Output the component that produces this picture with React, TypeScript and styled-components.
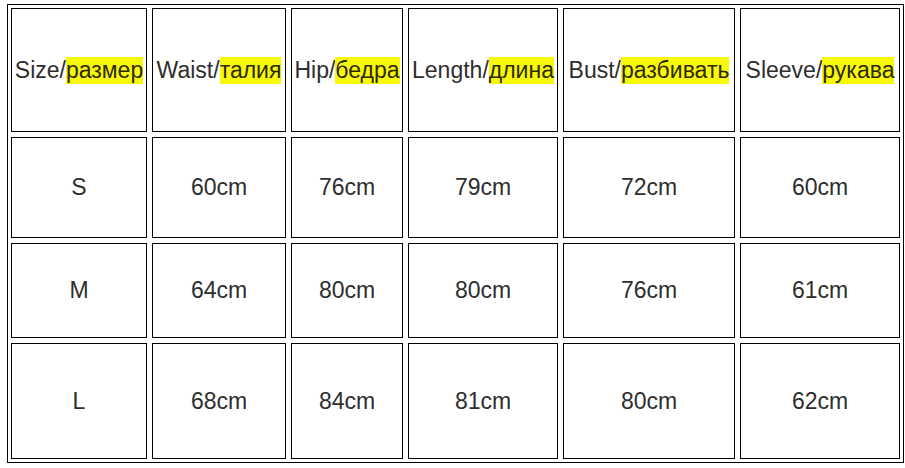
import React from "react";
import styled, { createGlobalStyle } from "styled-components";

const Global = createGlobalStyle`
  html, body { margin: 0; padding: 0; background: #ffffff; }
  body { font-family: "Liberation Sans", Arial, sans-serif; }
`;

const Page = styled.div`
  padding: 4px 0 0 7px;
`;

const Table = styled.div`
  display: grid;
  grid-template-columns: 136px 134px 112px 150px 172px 160px;
  grid-template-rows: 124px 101px 95px 116px;
  gap: 5px;
  padding: 3px;
  border: 1px solid #000;
  width: max-content;
`;

const Cell = styled.div`
  border: 1px solid #000;
  display: flex;
  align-items: center;
  justify-content: center;
  font-size: 23px;
  color: #2e2e2e;
  white-space: nowrap;
`;

const Mark = styled.span`
  background: #f8f80a;
  color: #2e2a00;
`;

const headers: [string, string][] = [
  ["Size/", "размер"],
  ["Waist/", "талия"],
  ["Hip/", "бедра"],
  ["Length/", "длина"],
  ["Bust/", "разбивать"],
  ["Sleeve/", "рукава"],
];

const rows: string[][] = [
  ["S", "60cm", "76cm", "79cm", "72cm", "60cm"],
  ["M", "64cm", "80cm", "80cm", "76cm", "61cm"],
  ["L", "68cm", "84cm", "81cm", "80cm", "62cm"],
];

export default function App() {
  return (
    <>
      <Global />
      <Page>
        <Table>
          {headers.map(([en, ru]) => (
            <Cell key={en}>
              {en}
              <Mark>{ru}</Mark>
            </Cell>
          ))}
          {rows.map((r, i) =>
            r.map((v, j) => <Cell key={`${i}-${j}`}>{v}</Cell>)
          )}
        </Table>
      </Page>
    </>
  );
}
